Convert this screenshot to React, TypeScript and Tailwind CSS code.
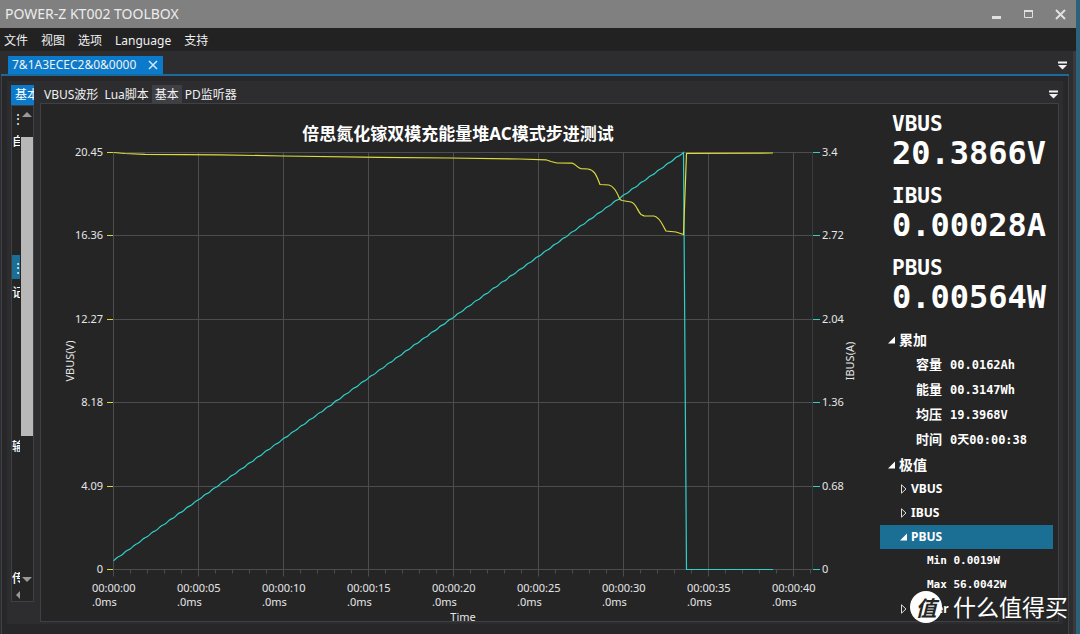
import { useState } from "react";
import clsx from "clsx";

const MENU = ["文件", "视图", "选项", "Language", "支持"];
const VIEWS = ["VBUS波形", "Lua脚本", "基本", "PD监听器"];

const READINGS = [
    { label: "VBUS", value: "20.3866V" },
    { label: "IBUS", value: "0.00028A" },
    { label: "PBUS", value: "0.00564W" },
];

const TOTALS = [
    { label: "容量", value: "00.0162Ah" },
    { label: "能量", value: "00.3147Wh" },
    { label: "均压", value: "19.3968V" },
    { label: "时间", value: "0天00:00:38" },
];

// plot area inside the chart's own coordinate system
const PLOT = { left: 72.5, right: 771.5, top: 48.5, bottom: 465.5, second: 17 };
const V_LABELS = ["20.45", "16.36", "12.27", "8.18", "4.09", "0"];
const I_LABELS = ["3.4", "2.72", "2.04", "1.36", "0.68", "0"];
const SECONDS = Array.from({ length: 42 }, (_, i) => i);

const VBUS_PATH =
    "M72.5 48.5 L84 49.5 L104 50.4 L179 50.8 L242 52 L339 53.3 L409 54 L479 55 L505 55.8 L510 57.5 L516 59 L531 59.2 " +
    "C535 60 536 64 540 64.6 L547 65 C553 66 555 70 559 80.5 L568 81 C573 82 576 88 579 95.5 L581 96.5 L590 98 " +
    "C595 99 597 108 600 110.5 L603 111.8 L613 112 C619 113 622 122 625 127 L635 128 L642.5 130.5 L645.5 49.3 L732 49";

const buildCurrentPath = () => {
    const points: string[] = [];
    for (let x = 72.5; x <= 642; x += 2) {
        const ramp = 456.5 - ((x - 72.5) / 570) * 408;
        points.push(`${x} ${(ramp + Math.sin(x * 0.72) * 0.45).toFixed(1)}`);
    }
    return `M${points.join(" L")} L642.5 48.5 L645.5 465.5 L732 465.5`;
};

const rowY = (i: number) => Math.floor(PLOT.top + (i * (PLOT.bottom - PLOT.top)) / 5) + 0.5;

function Chart() {
    return (
        <svg
            viewBox="0 0 839 517"
            className="block min-w-0 flex-1 font-['Noto_Sans','Noto_Sans_CJK_SC',sans-serif] text-[11px]"
            fill="#e6e6e6"
            role="img"
            aria-label="VBUS / IBUS"
        >
            <text x="417" y="36" textAnchor="middle" className="text-[17px] font-bold" fill="#fff">
                倍思氮化镓双模充能量堆AC模式步进测试
            </text>

            {/* 网格 */}
            <g stroke="#4d4d4f">
                {V_LABELS.map((label, i) => (
                    <line key={label} x1={PLOT.left} x2={PLOT.right} y1={rowY(i)} y2={rowY(i)} />
                ))}
                {SECONDS.map((s) => {
                    const x = PLOT.left + s * PLOT.second;
                    const major = s % 5 === 0;
                    return <line key={s} x1={x} x2={x} y1={major ? PLOT.top : PLOT.bottom} y2={PLOT.bottom + (major ? 7 : 4)} />;
                })}
                <line x1={PLOT.right} x2={PLOT.right} y1={PLOT.top} y2={PLOT.bottom} stroke="#3c3c3e" />
            </g>

            {/* 左右坐标轴 */}
            {V_LABELS.map((label, i) => (
                <g key={label}>
                    <line x1="66" x2="72" y1={rowY(i)} y2={rowY(i)} stroke="#d8d83c" />
                    <text x="62" y={rowY(i) + 3.5} textAnchor="end">{label}</text>
                </g>
            ))}
            {I_LABELS.map((label, i) => (
                <g key={label}>
                    <line x1="772" x2="779" y1={rowY(i)} y2={rowY(i)} stroke="#2fd0c8" />
                    <text x="781" y={rowY(i) + 3.5}>{label}</text>
                </g>
            ))}
            {SECONDS.filter((s) => s % 5 === 0).map((s) => {
                const x = 51 + s * PLOT.second;
                return (
                    <text key={s} x={x} y="488">
                        {`00:00:${String(s).padStart(2, "0")}`}
                        <tspan x={x} y="502">.0ms</tspan>
                    </text>
                );
            })}
            <text transform="translate(33 257) rotate(-90)" textAnchor="middle">VBUS(V)</text>
            <text transform="translate(813 257) rotate(-90)" textAnchor="middle">IBUS(A)</text>
            <text x="422" y="517" textAnchor="middle">Time</text>

            {/* 曲线 */}
            <path d={buildCurrentPath()} fill="none" stroke="#2fd0c8" strokeWidth="1.2" />
            <path d={VBUS_PATH} fill="none" stroke="#dcdc3c" strokeWidth="1.2" />
        </svg>
    );
}

function Arrow({ open }: { open: boolean }) {
    return (
        <svg viewBox="0 0 8 10" className="h-2.5 w-2 shrink-0">
            {open ? <path d="M8 1.5v7H1z" fill="#fff" /> : <path d="M2.5.8v8.4L7 5z" fill="none" stroke="#ddd" />}
        </svg>
    );
}

function OverflowIcon() {
    return (
        <svg viewBox="0 0 9 9" className="h-[9px] w-[9px]" fill="#f1f1f1">
            <path d="M0 .5h9v2H0zM0 4h9L4.5 8.5z" />
        </svg>
    );
}

interface NodeProps {
    label: string;
    open?: boolean;
    selected?: boolean;
    onClick?: () => void;
}

function LimitNode({ label, open = false, selected = false, onClick }: NodeProps) {
    return (
        <button
            onClick={onClick}
            className={clsx("flex h-6 w-[173px] items-center gap-1 pl-[19px] text-xs font-bold", selected && "bg-[#1b6e94]")}
        >
            <Arrow open={open} />
            {label}
        </button>
    );
}

function Readout() {
    const [selected, setSelected] = useState("PBUS");

    return (
        <aside className="w-[178px] shrink-0 pt-1.5 text-white">
            <dl className="flex flex-col gap-3.5 pl-3 font-['DejaVu_Sans_Mono',monospace] font-bold">
                {READINGS.map((r) => (
                    <div key={r.label}>
                        <dt className="text-[21px] leading-7">{r.label}</dt>
                        <dd className="text-[32px] leading-[30px]">{r.value}</dd>
                    </div>
                ))}
            </dl>

            <div className="mt-[15px]">
                <button className="flex h-[25px] items-center gap-1 pl-[7px] text-sm font-bold">
                    <Arrow open />
                    累加
                </button>
                <dl className="pl-9 font-bold">
                    {TOTALS.map((t) => (
                        <div key={t.label} className="flex h-[25px] items-center gap-2">
                            <dt className="text-[13px]">{t.label}</dt>
                            <dd className="font-['DejaVu_Sans_Mono','Noto_Sans_CJK_SC',monospace] text-xs">{t.value}</dd>
                        </div>
                    ))}
                </dl>
                <button className="flex h-[25px] items-center gap-1 pl-[7px] text-sm font-bold">
                    <Arrow open />
                    极值
                </button>
                {["VBUS", "IBUS", "PBUS"].map((name) => (
                    <LimitNode
                        key={name}
                        label={name}
                        open={name === "PBUS"}
                        selected={selected === name}
                        onClick={() => setSelected(name)}
                    />
                ))}
                <ul className="pl-[47px] font-['DejaVu_Sans_Mono',monospace] text-[11px] leading-6 font-bold">
                    <li>Min 0.0019W</li>
                    <li>Max 56.0042W</li>
                </ul>
                <LimitNode label="Power" selected={selected === "Power"} onClick={() => setSelected("Power")} />
            </div>
        </aside>
    );
}

// 左侧被压窄的停靠面板, 文字只露出一部分
function SideDock() {
    return (
        <section className="flex w-[23px] shrink-0 flex-col pb-5">
            <button className="h-5 overflow-hidden bg-[#0c7acb] pl-1 text-left text-xs leading-5 whitespace-nowrap text-white">基本</button>
            <div className="flex flex-1 flex-col border border-[#3f3f46] bg-[#252526]">
                <div className="flex flex-1">
                    <div className="flex w-2 flex-col overflow-hidden text-xs leading-6 font-medium whitespace-nowrap text-white">
                        <span className="font-['Noto_Sans_CJK_SC',sans-serif]">⋮</span>
                        <span>自动</span>
                        <span className="mt-[101px] bg-[#1b6e94] font-['Noto_Sans_CJK_SC',sans-serif]">⋮</span>
                        <span className="mt-0.5">记录</span>
                        <span className="mt-[130px]">输出</span>
                        <span className="mt-auto -mb-0.5">传输</span>
                    </div>
                    <div className="ml-px flex w-3 flex-col items-center">
                        <button aria-label="向上" className="flex h-[31px] items-start pt-1.5">
                            <svg viewBox="0 0 10 5" className="h-[5px] w-2.5" fill="#999"><path d="M5 0l5 5H0z" /></svg>
                        </button>
                        <div className="h-[299px] w-3 bg-[#b8b8b8]" />
                        <button aria-label="向下" className="mt-auto flex h-5 items-center">
                            <svg viewBox="0 0 10 5" className="h-[5px] w-2.5" fill="#999"><path d="M0 0h10L5 5z" /></svg>
                        </button>
                    </div>
                </div>
                <button aria-label="向左" className="flex h-3 items-center pl-1">
                    <svg viewBox="0 0 4 8" className="h-2 w-1" fill="#999"><path d="M4 0v8L0 4z" /></svg>
                </button>
            </div>
        </section>
    );
}

export default function App() {
    const [view, setView] = useState("基本");

    return (
        <div className="relative flex min-h-screen bg-[#2b6179] font-['Noto_Sans','Noto_Sans_CJK_SC',sans-serif] text-xs text-[#f1f1f1]">
            <div className="mr-1 flex min-w-0 flex-1 flex-col bg-[#2d2d30]">
                <header className="flex h-7 items-center justify-between bg-[#808080] pr-2.5 pl-[5px]">
                    <h1 className="text-sm text-[#ececec]">POWER-Z KT002 TOOLBOX</h1>
                    <div className="flex items-center gap-[21px]">
                        <button aria-label="最小化">
                            <svg viewBox="0 0 11 11" className="h-[11px] w-[11px]" fill="#e0e0e0"><path d="M1 7h9v3H1z" /></svg>
                        </button>
                        <button aria-label="最大化">
                            <svg viewBox="0 0 11 11" className="h-[11px] w-[11px]" fill="none" stroke="#e0e0e0">
                                <path d="M1.5 1.5h8v7h-8z" />
                                <path d="M1 2h9" strokeWidth="2" />
                            </svg>
                        </button>
                        <button aria-label="关闭">
                            <svg viewBox="0 0 11 11" className="h-[11px] w-[11px]" stroke="#e0e0e0" strokeWidth="2"><path d="M1 1l9 9M10 1l-9 9" /></svg>
                        </button>
                    </div>
                </header>

                <nav className="flex h-[23px] items-center gap-[13px] bg-[#222223] pt-0.5 pl-1">
                    {MENU.map((item) => (
                        <button key={item}>{item}</button>
                    ))}
                </nav>

                <main className="flex flex-1 flex-col border-r-[3px] border-[#3a3a3e] pr-1 pl-px">
                    <div className="flex items-end justify-between border-b-2 border-[#1b6a9c] pt-[5px] pl-[7px]">
                        <div className="flex h-[18px] items-center gap-3 bg-[#0c7acb] pr-[5px] pl-1">
                            <span>7&amp;1A3ECEC2&amp;0&amp;0000</span>
                            <button aria-label="关闭标签">
                                <svg viewBox="0 0 10 10" className="h-2.5 w-2.5" stroke="#d6e8f5" strokeWidth="1.5"><path d="M1 1l8 8M9 1l-8 8" /></svg>
                            </button>
                        </div>
                        <button aria-label="文档列表" className="mr-0.5 mb-1">
                            <OverflowIcon />
                        </button>
                    </div>

                    <div className="flex flex-1 flex-col border-x border-[#3f3f46] bg-[#27272a] px-[5px] pt-[5px] pb-2.5">
                        <div className="flex flex-1 gap-1.5 bg-[#2d2d30] px-1 pt-1 pb-0.5">
                            <SideDock />
                            <section className="flex min-w-0 flex-1 flex-col">
                                <div className="flex h-[18px] items-center justify-between pr-px pl-px">
                                    <div className="flex">
                                        {VIEWS.map((name) => (
                                            <button
                                                key={name}
                                                onClick={() => setView(name)}
                                                className={clsx("h-[18px] px-[3px] pt-px leading-[17px]", view === name && "bg-[#3f3f46]")}
                                            >
                                                {name}
                                            </button>
                                        ))}
                                    </div>
                                    <button aria-label="视图列表">
                                        <OverflowIcon />
                                    </button>
                                </div>
                                <div className="flex flex-1 items-start border border-[#3f3f46] bg-[#252526]">
                                    <Chart />
                                    <Readout />
                                </div>
                            </section>
                        </div>
                    </div>
                </main>
            </div>

            {/* 水印 */}
            <div className="pointer-events-none absolute right-3 bottom-[11px] flex items-center gap-[11px] text-white">
                <span className="flex h-8 w-8 items-center justify-center rounded-full bg-white font-['Noto_Sans_CJK_SC',sans-serif] text-[21px] leading-8 font-bold text-[#252526] italic">
                    值
                </span>
                <span className="text-[23px] leading-8">什么值得买</span>
            </div>
        </div>
    );
}
